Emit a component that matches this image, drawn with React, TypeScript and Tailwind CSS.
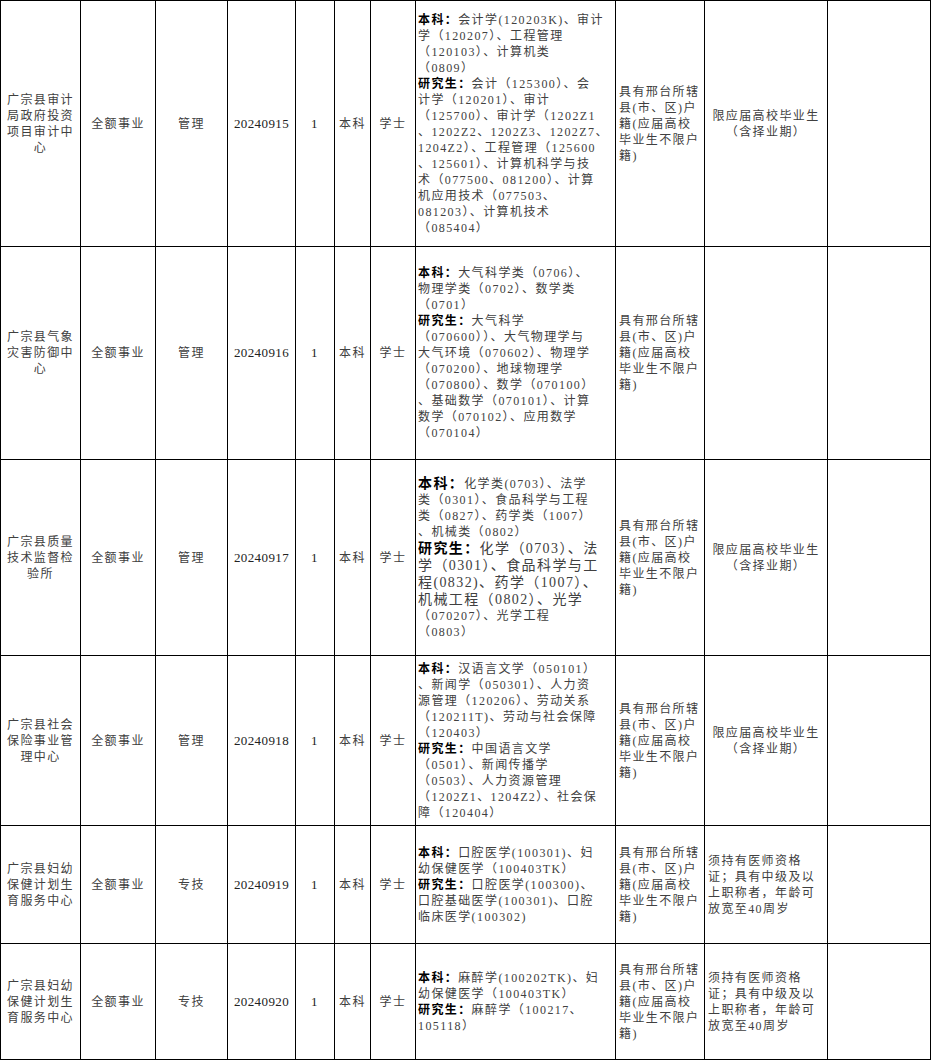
type Line = { label?: string; text: string; big?: boolean; bigLabel?: boolean };

type Row = {
  h: string;
  unit: string[];
  kind: string;
  code: string;
  major: Line[];
  note: "grad" | "doctor" | "";
};

const huji = ["具有邢台所辖", "县(市、区)户", "籍(应届高校", "毕业生不限户", "籍)"];
const doctor = ["须持有医师资格", "证；具有中级及以", "上职称者，年龄可", "放宽至40周岁"];

const rows: Row[] = [
  {
    h: "h-[246px]",
    unit: ["广宗县审计", "局政府投资", "项目审计中", "心"],
    kind: "管理",
    code: "20240915",
    note: "grad",
    major: [
      { label: "本科：", text: "会计学(120203K)、审计" },
      { text: "学（120207）、工程管理" },
      { text: "（120103）、计算机类" },
      { text: "（0809）" },
      { label: "研究生：", text: "会计（125300）、会" },
      { text: "计学（120201）、审计" },
      { text: "（125700）、审计学（1202Z1" },
      { text: "、1202Z2、1202Z3、1202Z7、" },
      { text: "1204Z2）、工程管理（125600" },
      { text: "、125601）、计算机科学与技" },
      { text: "术（077500、081200）、计算" },
      { text: "机应用技术（077503、" },
      { text: "081203）、计算机技术" },
      { text: "（085404）" },
    ],
  },
  {
    h: "h-[213px]",
    unit: ["广宗县气象", "灾害防御中", "心"],
    kind: "管理",
    code: "20240916",
    note: "",
    major: [
      { label: "本科：", text: "大气科学类（0706）、" },
      { text: "物理学类（0702）、数学类" },
      { text: "（0701）" },
      { label: "研究生：", text: "大气科学" },
      { text: "（070600））、大气物理学与" },
      { text: "大气环境（070602）、物理学" },
      { text: "（070200）、地球物理学" },
      { text: "（070800）、数学（070100）" },
      { text: "、基础数学（070101）、计算" },
      { text: "数学（070102）、应用数学" },
      { text: "（070104）" },
    ],
  },
  {
    h: "h-[196px]",
    unit: ["广宗县质量", "技术监督检", "验所"],
    kind: "管理",
    code: "20240917",
    note: "grad",
    major: [
      { label: "本科：", text: "化学类(0703）、法学", bigLabel: true },
      { text: "类（0301）、食品科学与工程" },
      { text: "类（0827）、药学类（1007）" },
      { text: "、机械类（0802）" },
      { label: "研究生：", text: "化学（0703）、法", big: true },
      { text: "学（0301）、食品科学与工", big: true },
      { text: "程(0832)、药学（1007）、", big: true },
      { text: "机械工程（0802）、光学", big: true },
      { text: "（070207）、光学工程" },
      { text: "（0803）" },
    ],
  },
  {
    h: "h-[170px]",
    unit: ["广宗县社会", "保险事业管", "理中心"],
    kind: "管理",
    code: "20240918",
    note: "grad",
    major: [
      { label: "本科：", text: "汉语言文学（050101）" },
      { text: "、新闻学（050301）、人力资" },
      { text: "源管理（120206）、劳动关系" },
      { text: "（120211T)、劳动与社会保障" },
      { text: "（120403）" },
      { label: "研究生：", text: "中国语言文学" },
      { text: "（0501）、新闻传播学" },
      { text: "（0503）、人力资源管理" },
      { text: "（1202Z1、1204Z2）、社会保" },
      { text: "障（120404）" },
    ],
  },
  {
    h: "h-[118px]",
    unit: ["广宗县妇幼", "保健计划生", "育服务中心"],
    kind: "专技",
    code: "20240919",
    note: "doctor",
    major: [
      { label: "本科：", text: "口腔医学(100301)、妇" },
      { text: "幼保健医学（100403TK）" },
      { label: "研究生：", text: "口腔医学(100300)、" },
      { text: "口腔基础医学(100301)、口腔" },
      { text: "临床医学(100302)" },
    ],
  },
  {
    h: "h-[116px]",
    unit: ["广宗县妇幼", "保健计划生", "育服务中心"],
    kind: "专技",
    code: "20240920",
    note: "doctor",
    major: [
      { label: "本科：", text: "麻醉学(100202TK)、妇" },
      { text: "幼保健医学（100403TK）" },
      { label: "研究生：", text: "麻醉学（100217、" },
      { text: "105118）" },
    ],
  },
];

const cell = "border border-black p-0 align-middle";

export default function App() {
  return (
    <div className="min-h-screen bg-white">
      <table className="table-fixed border-collapse w-[930px] font-['Liberation_Serif','Noto_Sans_CJK_SC',serif] text-[12px] leading-[16px] tracking-[1.4px] text-[#404040]">
        <colgroup>
          <col className="w-[80px]" />
          <col className="w-[75px]" />
          <col className="w-[72px]" />
          <col className="w-[68px]" />
          <col className="w-[39px]" />
          <col className="w-[36px]" />
          <col className="w-[45px]" />
          <col className="w-[200px]" />
          <col className="w-[89px]" />
          <col className="w-[123px]" />
          <col className="w-[103px]" />
        </colgroup>
        <tbody>
          {rows.map((r) => (
            <tr key={r.code} className={r.h}>
              {/* 单位 */}
              <td className={`${cell} text-center`}>
                {r.unit.map((l) => (
                  <div key={l} className="whitespace-nowrap">{l}</div>
                ))}
              </td>
              <td className={`${cell} text-center`}>全额事业</td>
              <td className={`${cell} text-center`}>{r.kind}</td>
              <td className={`${cell} text-center text-[13px] tracking-[0.4px] text-[#222]`}>{r.code}</td>
              <td className={`${cell} text-center text-[13px] text-[#222]`}>1</td>
              <td className={`${cell} text-center`}>本科</td>
              <td className={`${cell} text-center`}>学士</td>

              {/* 专业 */}
              <td className={`${cell} pl-[2px] overflow-hidden`}>
                {r.major.map((l, i) => (
                  <div
                    key={i}
                    className={`whitespace-nowrap ${l.big ? "text-[14px] leading-[17px]" : ""}`}
                  >
                    {l.label && (
                      <span className={`font-bold text-black ${l.bigLabel ? "text-[14px]" : ""}`}>{l.label}</span>
                    )}
                    {l.text}
                  </div>
                ))}
              </td>

              {/* 户籍 */}
              <td className={`${cell} pl-[3px]`}>
                {huji.map((l) => (
                  <div key={l} className="whitespace-nowrap">{l}</div>
                ))}
              </td>

              {/* 其他条件 */}
              {r.note === "grad" ? (
                <td className={`${cell} text-center`}>
                  <div className="whitespace-nowrap">限应届高校毕业生</div>
                  <div className="whitespace-nowrap">（含择业期）</div>
                </td>
              ) : r.note === "doctor" ? (
                <td className={`${cell} pl-[3px]`}>
                  {doctor.map((l) => (
                    <div key={l} className="whitespace-nowrap">{l}</div>
                  ))}
                </td>
              ) : (
                <td className={cell} />
              )}

              <td className={cell} />
            </tr>
          ))}
        </tbody>
      </table>
    </div>
  );
}
